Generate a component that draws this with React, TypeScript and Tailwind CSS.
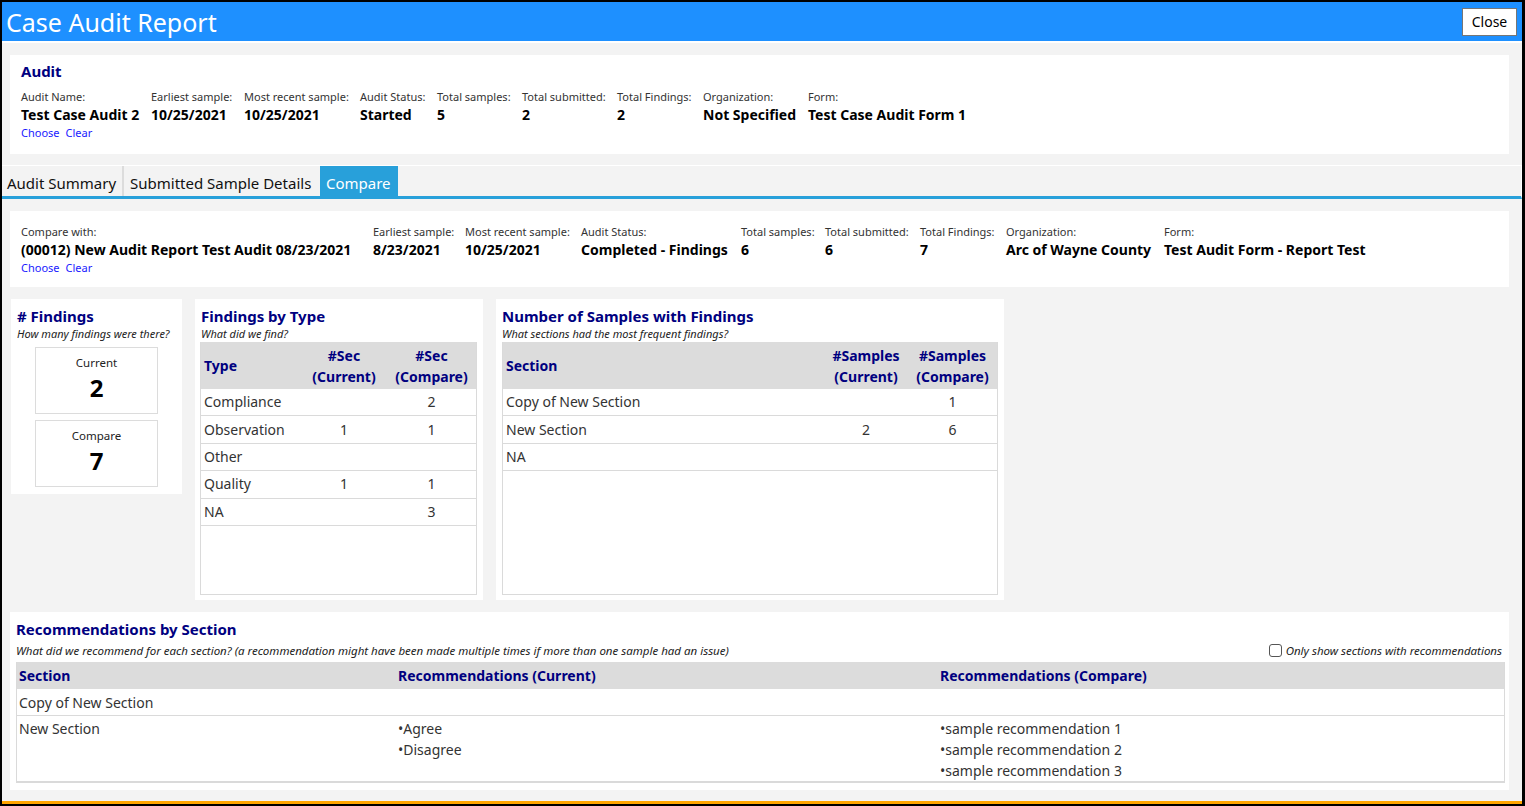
import React from "react";

const NAVY = "text-[#000080]";

type Info = { label: string; value: string; w: string; links?: boolean };

const auditInfo: Info[] = [
  { label: "Audit Name:", value: "Test Case Audit 2", w: "w-[130px]", links: true },
  { label: "Earliest sample:", value: "10/25/2021", w: "w-[93px]" },
  { label: "Most recent sample:", value: "10/25/2021", w: "w-[116px]" },
  { label: "Audit Status:", value: "Started", w: "w-[77px]" },
  { label: "Total samples:", value: "5", w: "w-[85px]" },
  { label: "Total submitted:", value: "2", w: "w-[95px]" },
  { label: "Total Findings:", value: "2", w: "w-[86px]" },
  { label: "Organization:", value: "Not Specified", w: "w-[105px]" },
  { label: "Form:", value: "Test Case Audit Form 1", w: "w-[200px]" },
];

const compareInfo: Info[] = [
  { label: "Compare with:", value: "(00012) New Audit Report Test Audit 08/23/2021", w: "w-[352px]", links: true },
  { label: "Earliest sample:", value: "8/23/2021", w: "w-[92px]" },
  { label: "Most recent sample:", value: "10/25/2021", w: "w-[116px]" },
  { label: "Audit Status:", value: "Completed - Findings", w: "w-[160px]" },
  { label: "Total samples:", value: "6", w: "w-[84px]" },
  { label: "Total submitted:", value: "6", w: "w-[95px]" },
  { label: "Total Findings:", value: "7", w: "w-[86px]" },
  { label: "Organization:", value: "Arc of Wayne County", w: "w-[158px]" },
  { label: "Form:", value: "Test Audit Form - Report Test", w: "w-[220px]" },
];

function InfoRow({ items }: { items: Info[] }) {
  return (
    <div className="flex items-start">
      {items.map((it) => (
        <div key={it.label} className={`${it.w} shrink-0`}>
          <p className="h-[18px] text-[11px] leading-[18px] text-[#333]">{it.label}</p>
          <p className="h-[18px] whitespace-nowrap text-[14px] font-bold leading-[18px] text-black">{it.value}</p>
          {it.links && (
            <p className="flex h-[18px] gap-[6px] text-[11px] leading-[18px] text-[#1a1aff]">
              <span>Choose</span>
              <span>Clear</span>
            </p>
          )}
        </div>
      ))}
    </div>
  );
}

const typeRows = [
  ["Compliance", "", "2"],
  ["Observation", "1", "1"],
  ["Other", "", ""],
  ["Quality", "1", "1"],
  ["NA", "", "3"],
];

const sampleRows = [
  ["Copy of New Section", "", "1"],
  ["New Section", "2", "6"],
  ["NA", "", ""],
];

function GridTable({
  rows,
  first,
  col2,
  col3,
  w1,
  w2,
}: {
  rows: string[][];
  first: string;
  col2: [string, string];
  col3: [string, string];
  w1: string;
  w2: string;
}) {
  return (
    <div className="flex h-[253px] flex-col border-x border-b border-[#dadada]">
      <div className={`flex h-[47px] items-center bg-[#dcdcdc] text-[14px] font-bold leading-[21px] ${NAVY}`}>
        <div className={`${w1} pl-[3px]`}>{first}</div>
        <div className={`${w2} text-center`}>
          <p>{col2[0]}</p>
          <p>{col2[1]}</p>
        </div>
        <div className="flex-1 text-center">
          <p>{col3[0]}</p>
          <p>{col3[1]}</p>
        </div>
      </div>
      {rows.map((r) => (
        <div key={r[0]} className="flex h-[27.4px] items-center border-b border-[#dadada] pb-[1px] text-[14px] text-[#333]">
          <div className={`${w1} pl-[3px]`}>{r[0]}</div>
          <div className={`${w2} text-center`}>{r[1]}</div>
          <div className="flex-1 text-center">{r[2]}</div>
        </div>
      ))}
    </div>
  );
}

function PanelTitle({ title, sub }: { title: string; sub: string }) {
  return (
    <div>
      <h3 className={`h-[20px] text-[15px] font-bold leading-[20px] ${NAVY}`}>{title}</h3>
      <p className="h-[16px] text-[11px] italic leading-[16px] text-[#222]">{sub}</p>
    </div>
  );
}

function CountBox({ label, value }: { label: string; value: string }) {
  return (
    <div className="flex h-[67px] w-[123px] flex-col items-center border border-[#dcdcdc] pt-[6px]">
      <span className="text-[11.5px] leading-[18px] text-[#222]">{label}</span>
      <span className="text-[24px] font-bold leading-[32px] text-black">{value}</span>
    </div>
  );
}

export default function App() {
  return (
    <div className="flex h-[806px] w-[1525px] flex-col overflow-hidden border-b-2 border-l-2 border-r-[3px] border-t-2 border-black bg-[#f3f3f3] font-['Noto_Sans',sans-serif]">
      {/* title bar */}
      <header className="flex h-[39px] shrink-0 items-center justify-between bg-[#1e90ff] pl-[4px] pr-[5px]">
        <h1 className="text-[25px] leading-[30px] text-white">Case Audit Report</h1>
        <button className="h-[28px] w-[55px] border border-[#767676] bg-white text-[14px] text-black">
          Close
        </button>
      </header>
      <div className="h-[2px] shrink-0 bg-white" />

      {/* audit card */}
      <section className="ml-2 mr-[13px] mt-3 h-[99px] shrink-0 bg-white pl-[11px] pt-[6px]">
        <h2 className={`mb-[7px] h-[20px] text-[15px] font-bold leading-[20px] ${NAVY}`}>Audit</h2>
        <InfoRow items={auditInfo} />
      </section>

      {/* tabs */}
      <nav className="mt-[11px] flex h-[34px] shrink-0 items-stretch border-r border-t border-white border-b-[3px] border-b-[#28a0da]">
        <div className="flex w-[120px] items-center pl-[5px] pt-[5px] text-[15px] text-[#111]">Audit Summary</div>
        <div className="w-[2px] bg-[#dcdcdc]" />
        <div className="flex w-[196px] items-center pl-[6px] pt-[5px] text-[15px] text-[#111]">Submitted Sample Details</div>
        <div className="flex w-[78px] items-center bg-[#28a0da] pl-[6px] pt-[5px] text-[15px] text-white">Compare</div>
      </nav>

      {/* compare card */}
      <section className="ml-2 mr-[13px] mt-3 h-[76px] shrink-0 bg-white pl-[11px] pt-[12px]">
        <InfoRow items={compareInfo} />
      </section>

      {/* panels */}
      <div className="mt-3 flex shrink-0 items-start">
        <div className="ml-[9px] h-[195px] w-[171px] bg-white pl-[6px] pt-[7px]">
          <PanelTitle title="# Findings" sub="How many findings were there?" />
          <div className="ml-[18px] mt-[5px] flex flex-col gap-[6px]">
            <CountBox label="Current" value="2" />
            <CountBox label="Compare" value="7" />
          </div>
        </div>
        <div className="ml-[13px] h-[301px] w-[288px] bg-white pl-[5px] pr-[6px] pt-[7px]">
          <div className="pl-[1px]">
            <PanelTitle title="Findings by Type" sub="What did we find?" />
          </div>
          <GridTable
            rows={typeRows}
            first="Type"
            col2={["#Sec", "(Current)"]}
            col3={["#Sec", "(Compare)"]}
            w1="w-[100px]"
            w2="w-[86px]"
          />
        </div>
        <div className="ml-[13px] h-[301px] w-[508px] bg-white pl-[6px] pr-[6px] pt-[7px]">
          <PanelTitle title="Number of Samples with Findings" sub="What sections had the most frequent findings?" />
          <GridTable
            rows={sampleRows}
            first="Section"
            col2={["#Samples", "(Current)"]}
            col3={["#Samples", "(Compare)"]}
            w1="w-[321px]"
            w2="w-[84px]"
          />
        </div>
      </div>

      {/* recommendations */}
      <section className="ml-2 mr-[13px] mt-3 h-[178px] shrink-0 bg-white pl-[6px] pr-[4px] pt-[7px]">
        <h3 className={`h-[20px] text-[15px] font-bold leading-[20px] ${NAVY}`}>Recommendations by Section</h3>
        <div className="flex h-[23px] items-center justify-between">
          <p className="text-[11.5px] italic text-[#222]">
            What did we recommend for each section? (a recommendation might have been made multiple times if more than one sample had an issue)
          </p>
          <label className="flex items-center gap-[4px] pr-[3px] text-[11.5px] italic text-[#222]">
            <span className="h-[13px] w-[13px] rounded-[3px] border border-[#555] bg-white" />
            Only show sections with recommendations
          </label>
        </div>
        <div className="border-x border-b-2 border-[#dadada]">
          <div className={`flex h-[27px] items-center bg-[#dcdcdc] text-[14px] font-bold ${NAVY}`}>
            <div className="w-[381px] pl-[2px]">Section</div>
            <div className="w-[542px]">Recommendations (Current)</div>
            <div className="flex-1">Recommendations (Compare)</div>
          </div>
          <div className="flex h-[27px] items-center border-b border-[#dadada] text-[14px] text-[#333]">
            <div className="w-[381px] pl-[2px]">Copy of New Section</div>
          </div>
          <div className="flex h-[65px] items-start pt-[2px] text-[14px] leading-[21px] text-[#333]">
            <div className="w-[381px] pl-[2px]">New Section</div>
            <div className="w-[542px]">
              <p>•Agree</p>
              <p>•Disagree</p>
            </div>
            <div className="flex-1">
              <p>•sample recommendation 1</p>
              <p>•sample recommendation 2</p>
              <p>•sample recommendation 3</p>
            </div>
          </div>
        </div>
      </section>

      <div className="flex-1" />
      <div className="h-[3px] shrink-0 bg-[#ffa500]" />
    </div>
  );
}
